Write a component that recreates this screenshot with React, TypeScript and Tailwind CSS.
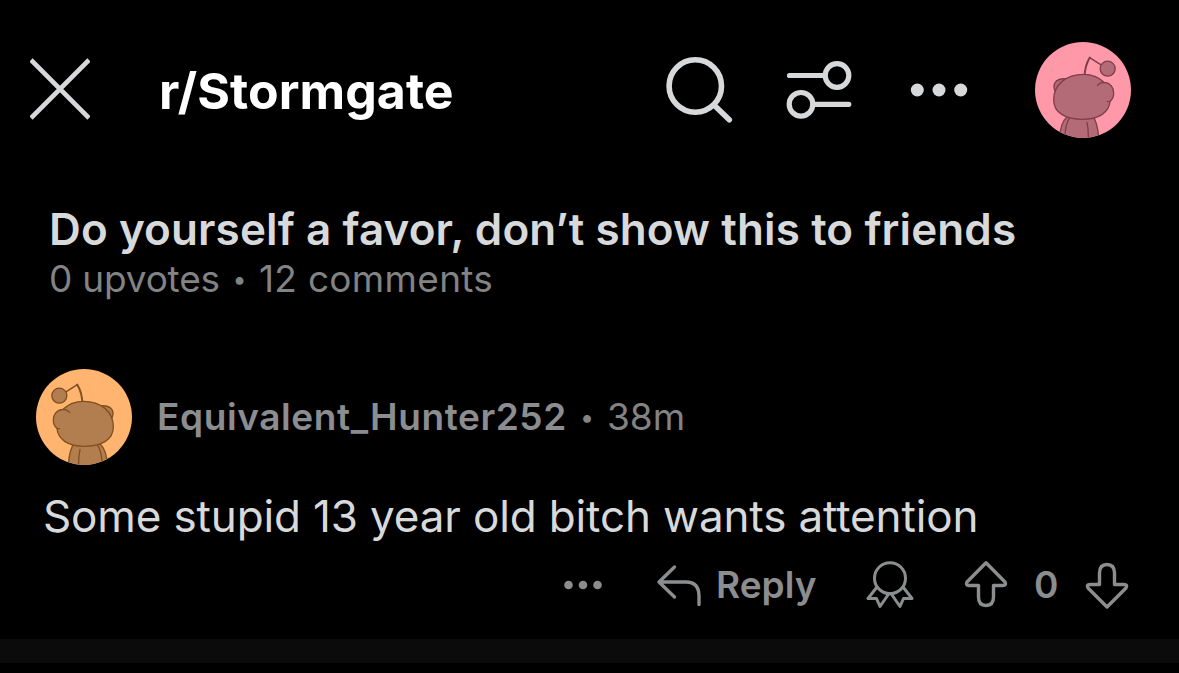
import type { ReactNode } from "react";

function Icon({ box, className, width, children }: { box: string; className: string; width: number; children: ReactNode }) {
  return (
    <svg viewBox={box} className={`shrink-0 ${className}`} fill="none" stroke="currentColor" strokeWidth={width} strokeLinecap="round" strokeLinejoin="round">
      {children}
    </svg>
  );
}

function Avatar({ id, bg, body, line, flip }: { id: string; bg: string; body: string; line: string; flip?: boolean }) {
  return (
    <svg viewBox="45 36 288 288" className="size-[96px] shrink-0">
      <clipPath id={id}>
        <circle cx="189" cy="180" r="144" />
      </clipPath>
      <g clipPath={`url(#${id})`}>
        <rect x="45" y="36" width="288" height="288" fill={bg} />
        <g transform={flip ? "translate(378 0) scale(-1 1)" : undefined} fill={body} stroke={line} strokeWidth="4" strokeLinecap="round" strokeLinejoin="round">
          <path d="M140 262Q120 280 119 330H236Q234 278 218 258Z" />
          <path d="M149 263Q135 284 134 330M201 277Q206 300 205 330" fill="none" />
          <path d="M107 186Q98 172 105 158Q116 143 142 147Z" />
          <path d="M194 140Q194 108 209 83" fill="none" strokeWidth="6" />
          <path d="M209 83L242 104" fill="none" strokeWidth="4.5" />
          <circle cx="263" cy="116" r="22.5" />
          <path d="M190 133C217 133 238 143 252 157C271 158 282 173 281 190C281 202 277 209 270 214C268 248 235 268 188 268C136 268 101 248 101 209C101 164 139 133 190 133Z" />
          <path d="M232 167Q239 156 254 158M262 215Q267 216 271 213" fill="none" strokeWidth="3.5" />
        </g>
      </g>
    </svg>
  );
}

function Dot({ className }: { className: string }) {
  return <span className={`inline-flex shrink-0 justify-center text-[25px] leading-[46px] tracking-normal ${className}`}>•</span>;
}

export default function App() {
  return (
    <main className="flex h-[673px] w-[1179px] flex-col overflow-hidden bg-black font-['Inter','Liberation_Sans',sans-serif] whitespace-nowrap text-[#d7dadc]">
      <header className="flex h-[180px] shrink-0 items-center pl-[30px] text-[#d7d8da]">
        <Icon box="30 40 60 100" className="h-[100px] w-[60px]" width={4.6}>
          <path d="M31 60L89 118M89 60L31 118" strokeLinecap="butt" />
        </Icon>
        <h1 className="ml-[69px] w-[506px] pt-px text-[50px] leading-[60px] font-bold tracking-[0.05px] text-white">r/Stormgate</h1>
        <Icon box="665 40 68 100" className="h-[100px] w-[68px]" width={5.6}>
          <circle cx="695.3" cy="86" r="26.2" />
          <path d="M715 106L729.3 119.7" />
        </Icon>
        <Icon box="786 40 67 100" className="ml-[53px] h-[100px] w-[67px]" width={5.2}>
          <circle cx="837" cy="75.5" r="11.8" />
          <circle cx="801" cy="104.3" r="11.8" />
          <path d="M789.5 75.5H825M813 104.3H848.8" />
        </Icon>
        <Icon box="910 40 58 100" className="ml-[57px] h-[100px] w-[58px]" width={0}>
          <g fill="currentColor" stroke="none">
            <circle cx="917.3" cy="90" r="6.5" />
            <circle cx="939" cy="90" r="6.5" />
            <circle cx="960.7" cy="90" r="6.5" />
          </g>
        </Icon>
        <div className="ml-[67px]">
          <Avatar id="user-avatar" bg="#ff99aa" body="#b36b77" line="#803e4b" />
        </div>
      </header>

      <section className="h-[189px] shrink-0 pt-[23px] pl-[49px]">
        <h2 className="text-[44px] leading-[52px] font-semibold tracking-[0.1px] text-[#d7d9da]">Do yourself a favor, don’t show this to friends</h2>
        <p className="mt-px flex items-center text-[37px] leading-[46px] text-[#818384]">
          <span className="w-[171px] tracking-[-0.2px]">0 upvotes</span>
          <Dot className="w-[39px]" />
          <span className="tracking-[0.3px]">12 comments</span>
        </p>
      </section>

      <article className="h-[270px] shrink-0">
        <div className="flex h-[96px] items-center pl-[36px] text-[37px] text-[#8b8d90]">
          <Avatar id="author-avatar" bg="#ffb470" body="#b37e4f" line="#80501e" flip />
          <span className="ml-[25px] w-[410px] font-semibold tracking-[0.6px]">Equivalent_Hunter252</span>
          <Dot className="w-[40px] text-[#818384]" />
          <span className="text-[#818384]">38m</span>
        </div>
        <p className="mt-[25px] pl-[43px] text-[44px] leading-[52px] tracking-[-0.14px] text-[#d7d9da]">Some stupid 13 year old bitch wants attention</p>
        <div className="mt-[18px] flex h-[50px] items-center pl-[563px] text-[37px] font-semibold text-[#8b8d8e]">
          <Icon box="563 560 40 50" className="h-[50px] w-[40px]" width={0}>
            <g fill="currentColor" stroke="none">
              <circle cx="568.5" cy="585" r="4.3" />
              <circle cx="583" cy="585" r="4.3" />
              <circle cx="597.5" cy="585" r="4.3" />
            </g>
          </Icon>
          <Icon box="656 560 46 50" className="ml-[53px] h-[50px] w-[46px]" width={3.4}>
            <path d="M674.5 567L659 582L674.5 597M659 582H686Q699 582 699 596V604.5" />
          </Icon>
          <span className="ml-[14px] w-[150px]">Reply</span>
          <Icon box="866 560 48 50" className="h-[50px] w-[48px]" width={3}>
            <circle cx="890" cy="578.2" r="15.5" />
            <path d="M877 587L868 598.5L876.5 598.5L880 606.5L889 593.5M891 593.5L900 606.5L903.5 598.5L912 598.5L903 587" />
          </Icon>
          <Icon box="963 560 46 50" className="ml-[49px] h-[50px] w-[46px]" width={3.4}>
            <path d="M986 562.7L967 582Q965.5 585.5 969 585.5H978.5V597Q978.5 605.5 986 605.5T993.5 597V585.5H1003Q1006.5 585.5 1005 582Z" />
          </Icon>
          <span className="ml-[25px] w-[51px]">0</span>
          <Icon box="1085 560 45 50" className="h-[50px] w-[45px]" width={3.4}>
            <path d="M1107 607L1088 588Q1086 584.5 1090 584.5H1099.5V573Q1099.5 564.5 1107 564.5T1114.5 573V584.5H1124Q1128 584.5 1126 588Z" />
          </Icon>
        </div>
      </article>

      <div className="h-[24px] shrink-0 bg-[#0b0b0b]" />
    </main>
  );
}
